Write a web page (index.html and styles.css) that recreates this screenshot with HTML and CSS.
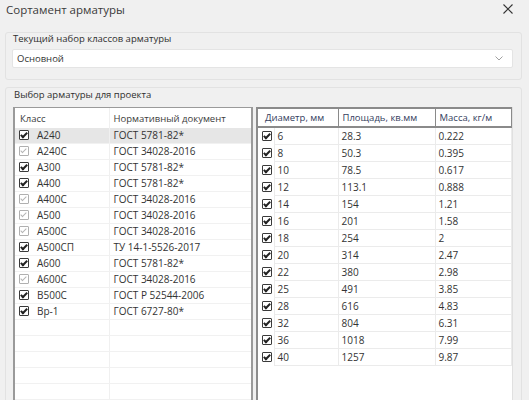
FILE: index.html
```html
<!DOCTYPE html>
<html lang="ru">
<head>
    <meta charset="UTF-8">
    <title>Сортамент арматуры</title>
    <link rel="stylesheet" href="styles.css">
</head>
<body>
    <div class="titlebar">
        <span class="title">Сортамент арматуры</span>
        <svg class="close" width="10" height="10" viewBox="0 0 10 10">
            <path d="M0.5 0.5 L9.5 9.5 M9.5 0.5 L0.5 9.5" stroke="#333" stroke-width="1.1" fill="none"/>
        </svg>
    </div>

    <div class="group group-set">
        <div class="group-label">Текущий набор классов арматуры</div>
        <div class="select">
            <span>Основной</span>
            <svg width="8" height="5" viewBox="0 0 8 5">
                <path d="M0.5 0.5 L4 4 L7.5 0.5" stroke="#a0a0a0" stroke-width="1" fill="none"/>
            </svg>
        </div>
    </div>

    <div class="group group-pick">
        <div class="group-label">Выбор арматуры для проекта</div>
        <div class="tables">
            <div class="grid classes">
                <table>
                    <colgroup><col class="c-class"><col></colgroup>
                    <thead>
                        <tr><th>Класс</th><th>Нормативный документ</th></tr>
                    </thead>
                    <tbody>
                        <tr class="sel"><td><span class="cb on"></span>A240</td><td>ГОСТ 5781-82*</td></tr>
                        <tr><td><span class="cb dim"></span>A240C</td><td>ГОСТ 34028-2016</td></tr>
                        <tr><td><span class="cb on"></span>A300</td><td>ГОСТ 5781-82*</td></tr>
                        <tr><td><span class="cb on"></span>A400</td><td>ГОСТ 5781-82*</td></tr>
                        <tr><td><span class="cb dim"></span>A400C</td><td>ГОСТ 34028-2016</td></tr>
                        <tr><td><span class="cb dim"></span>A500</td><td>ГОСТ 34028-2016</td></tr>
                        <tr><td><span class="cb dim"></span>A500C</td><td>ГОСТ 34028-2016</td></tr>
                        <tr><td><span class="cb on"></span>A500СП</td><td>ТУ 14-1-5526-2017</td></tr>
                        <tr><td><span class="cb on"></span>A600</td><td>ГОСТ 5781-82*</td></tr>
                        <tr><td><span class="cb dim"></span>A600C</td><td>ГОСТ 34028-2016</td></tr>
                        <tr><td><span class="cb on"></span>B500C</td><td>ГОСТ Р 52544-2006</td></tr>
                        <tr><td><span class="cb on"></span>Bp-1</td><td>ГОСТ 6727-80*</td></tr>
                        <tr><td></td><td></td></tr>
                        <tr><td></td><td></td></tr>
                        <tr><td></td><td></td></tr>
                        <tr><td></td><td></td></tr>
                        <tr><td></td><td></td></tr>
                    </tbody>
                </table>
            </div>

            <div class="grid diam">
                <table>
                    <colgroup><col class="c-cb"><col class="c-d"><col class="c-a"><col></colgroup>
                    <thead>
                        <tr><th colspan="2">Диаметр, мм</th><th>Площадь, кв.мм</th><th>Масса, кг/м</th></tr>
                    </thead>
                    <tbody id="diam-rows"></tbody>
                </table>
            </div>
        </div>
    </div>

    <script>
        const rows = [
            [6, '28.3', '0.222'], [8, '50.3', '0.395'], [10, '78.5', '0.617'],
            [12, '113.1', '0.888'], [14, '154', '1.21'], [16, '201', '1.58'],
            [18, '254', '2'], [20, '314', '2.47'], [22, '380', '2.98'],
            [25, '491', '3.85'], [28, '616', '4.83'], [32, '804', '6.31'],
            [36, '1018', '7.99'], [40, '1257', '9.87']
        ];

        document.getElementById('diam-rows').innerHTML = rows.map(r =>
            `<tr><td class="cbcell"><span class="cb on"></span></td><td>${r[0]}</td><td>${r[1]}</td><td>${r[2]}</td></tr>`
        ).join('');
    </script>
</body>
</html>
```

FILE: styles.css
```css
body {
    margin: 0;
    height: 400px;
    overflow: hidden;
    background-color: #f0f0f0;
    font-family: "Open Sans", "Noto Sans", sans-serif;
    font-size: 10px;
    color: #333;
}
.titlebar {
    height: 32px;
    display: flex;
    justify-content: space-between;
    padding: 0 16px 0 6px;
    box-sizing: border-box;
}
.title {
    font-size: 11.5px;
    line-height: 20px;
    color: #3a3a3a;
}
.close {
    margin-top: 4px;
}
.group {
    margin: 0 7px 0 5px;
    border: 1px solid #e2e2e2;
    border-radius: 3px;
    padding: 0 8px 0 6px;
}
.group-label {
    line-height: 12px;
    height: 11px;
    padding-left: 1px;
    font-size: 9.5px;
    color: #2f2f2f;
}
.group-set {
    padding-bottom: 11px;
    margin-bottom: 7px;
}
.select {
    margin-top: 5px;
    height: 19px;
    background-color: #fff;
    border: 1px solid #e4e4e4;
    border-radius: 2px;
    box-sizing: border-box;
    display: flex;
    align-items: center;
    justify-content: space-between;
    padding: 0 9px 0 4px;
    font-size: 9.5px;
}
.group-pick {
    height: 400px;
    padding-left: 7px;
}
.group-pick .group-label {
    margin-top: 1px;
}
.tables {
    display: flex;
    gap: 3px;
    margin-top: 7px;
}
.grid {
    background-color: #fff;
    height: 300px;
    box-sizing: border-box;
}
.grid table {
    width: 100%;
    border-collapse: collapse;
    table-layout: fixed;
}
.grid td, .grid th {
    padding: 0;
    white-space: nowrap;
    overflow: hidden;
    text-align: left;
    font-weight: normal;
}
.classes {
    width: 240px;
    border: 1px solid #9a9a9a;
    border-left-width: 2px;
    border-right-width: 2px;
    border-bottom: none;
}
.classes .c-class {
    width: 94px;
}
.classes th {
    height: 20px;
    padding-left: 5px;
    font-size: 9.5px;
    color: #3c3c3c;
}
.classes th + th, .classes td + td {
    border-left: 1px solid #f0f0f0;
}
.classes th + th {
    padding-left: 4px;
}
.classes td {
    height: 15px;
    line-height: 15px;
    border-bottom: 1px solid #f1f1f1;
    padding-left: 4px;
}
.classes td + td {
    padding-left: 4px;
}
.classes tr.sel td {
    background-color: #e6e6e6;
}
.cb {
    display: inline-block;
    position: relative;
    width: 10px;
    height: 10px;
    box-sizing: border-box;
    border: 1px solid #3a3a3a;
    border-radius: 1px;
    background-color: #fff;
    vertical-align: -1px;
    margin-right: 8px;
}
.cb::after {
    content: "";
    position: absolute;
    left: 2px;
    top: 0;
    width: 2px;
    height: 5px;
    border: solid #222;
    border-width: 0 2px 2px 0;
    transform: rotate(45deg);
}
.cb.dim {
    border-color: #b0b0b0;
}
.cb.dim::after {
    border-color: #b4b4b4;
    border-width: 0 1px 1px 0;
}
.diam {
    flex: 1;
    border-left: 2px solid #8c8c8c;
    border-right: 1px solid #e0e0e0;
}
.diam .c-cb {
    width: 16px;
}
.diam .c-d {
    width: 64px;
}
.diam .c-a {
    width: 97px;
}
.diam th {
    height: 17px;
    border: 1px solid #8a8a8a;
    border-top-width: 2px;
    border-bottom-width: 2px;
    padding-left: 4px;
    color: #34405e;
    font-size: 9.5px;
}
.diam th:first-child {
    border-left: none;
    padding-left: 7px;
}
.diam td {
    height: 16px;
    line-height: 16px;
    border: 1px solid #ebebeb;
    padding-left: 3px;
}
.diam td.cbcell {
    border: none;
    padding-left: 4px;
}
.diam td.cbcell .cb {
    margin-right: 0;
}
```
